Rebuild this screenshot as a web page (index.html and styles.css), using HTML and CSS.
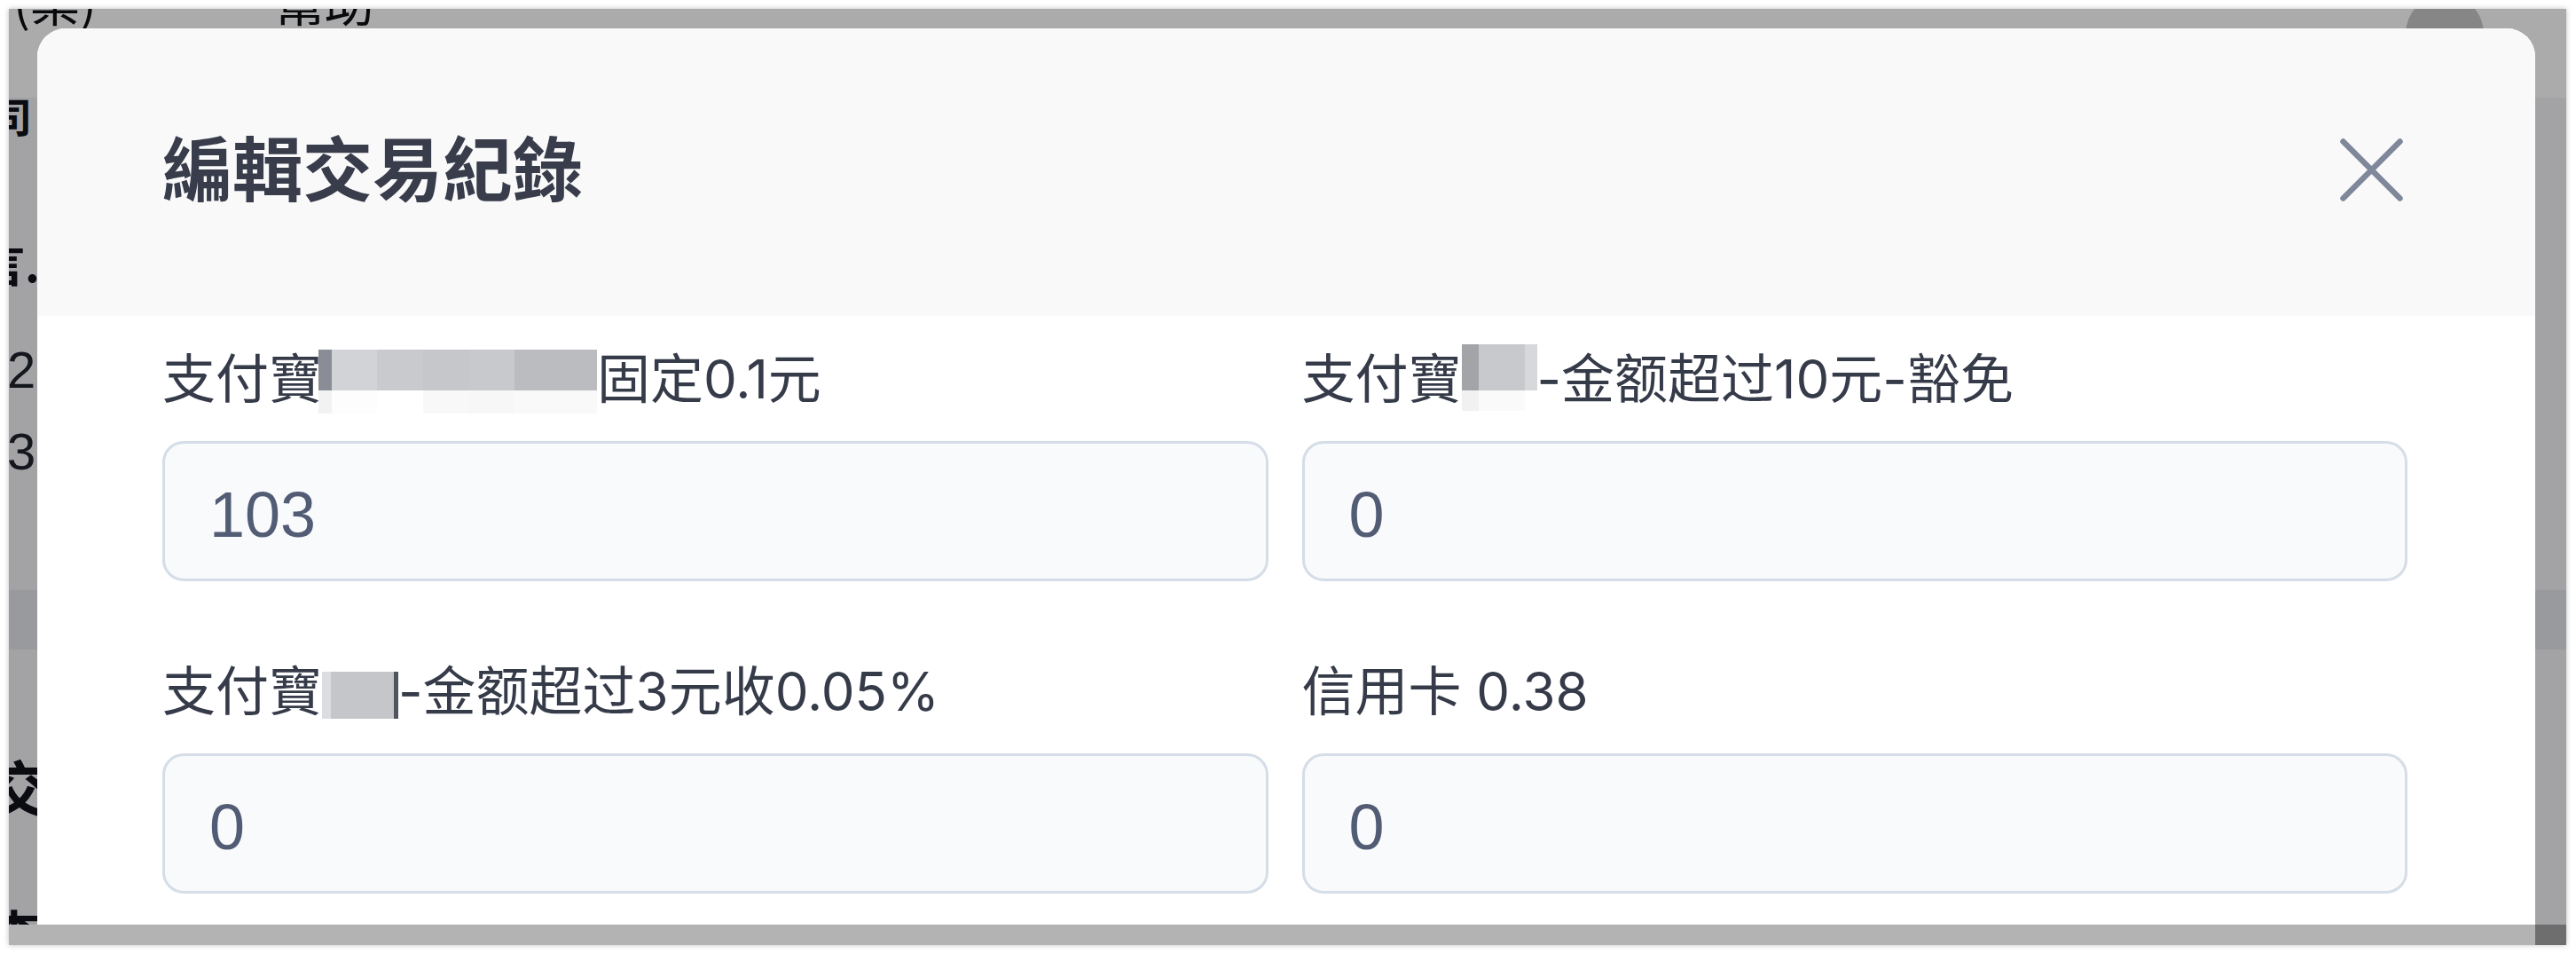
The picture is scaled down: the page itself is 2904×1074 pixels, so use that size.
FILE: index.html
```html
<!DOCTYPE html>
<html lang="zh-Hant">
<head>
<meta charset="utf-8">
<title>編輯交易紀錄</title>
<link rel="stylesheet" href="styles.css">
</head>
<body>
<div class="window">
  <div class="viewport">
    <div class="page">
      <div class="page-head">
        <div class="head-row">
          <span class="head-a">(案)</span>
          <span class="head-b">幫助</span>
          <span class="avatar"></span>
        </div>
      </div>
      <div class="page-main">
        <div class="frag f1">司</div>
        <div class="frag f2">言.</div>
        <div class="frag f3">2</div>
        <div class="frag f4">3</div>
        <div class="band"></div>
        <div class="frag f5">交</div>
        <div class="frag f6">查</div>
      </div>
    </div>
    <div class="overlay">
      <div class="modal">
        <div class="modal-head">
          <h2 class="modal-title">編輯交易紀錄</h2>
          <button class="close" type="button" aria-label="關閉">
            <svg width="76" height="76" viewBox="0 0 76 76" fill="none" stroke="currentColor" stroke-width="6.5" stroke-linecap="round">
              <path d="M3.5 3.5 67.5 67.5M67.5 3.5 3.5 67.5"/>
            </svg>
          </button>
        </div>
        <div class="modal-body">
          <div class="field">
            <label class="label">支付寶<span class="redact r1"><i class="cell a1"></i><i class="cell a2"></i><i class="cell a3"></i><i class="cell a4"></i><i class="cell a5"></i><i class="cell a6"></i></span>固定0.1元</label>
            <input class="input" type="text" value="103" readonly>
          </div>
          <div class="field">
            <label class="label">支付寶<span class="redact r2"><i class="cell b1"></i><i class="cell b2"></i><i class="cell b3"></i></span>-金额超过10元-豁免</label>
            <input class="input" type="text" value="0" readonly>
          </div>
          <div class="field">
            <label class="label">支付寶<span class="redact r3"><i class="cell c1"></i><i class="cell c2"></i><i class="cell c3"></i></span>-金额超过3元收0.05%</label>
            <input class="input" type="text" value="0" readonly>
          </div>
          <div class="field">
            <label class="label">信用卡 0.38</label>
            <input class="input" type="text" value="0" readonly>
          </div>
        </div>
      </div>
    </div>
  </div>
  <div class="hbar"><span class="hbar-fill"></span><span class="hbar-corner"></span></div>
</div>
</body>
</html>
```

FILE: styles.css
```css
html, body {
  margin: 0;
  padding: 0;
  background: #ffffff;
}

body {
  padding: 10px;
  font-family: "Noto Sans CJK TC", "Noto Sans", sans-serif;
}

.window {
  width: 2883px;
  height: 1055px;
  display: grid;
  grid-template-rows: 1fr 23px;
  overflow: hidden;
  box-shadow: 0 0 6px rgba(0, 0, 0, 0.25);
}

.viewport {
  position: relative;
  overflow: hidden;
}

/* underlying page (dimmed by overlay) */
.page {
  display: flex;
  flex-direction: column;
  height: 100%;
}

.page-head {
  height: 100px;
  flex: none;
  background: #ffffff;
}

.head-row {
  display: flex;
  align-items: flex-start;
  margin-top: -38px;
  height: 56px;
  font-size: 56px;
  line-height: 56px;
  color: #0d0f14;
}

.head-a {
  margin-left: 5px;
}

.head-b {
  margin-left: 201px;
}

.avatar {
  width: 88px;
  height: 88px;
  border-radius: 50%;
  background: #c8c8c8;
  margin-left: auto;
  margin-right: 93px;
  margin-top: 22px;
}

.page-main {
  flex: 1;
  background: #f3f4f6;
  display: flex;
  flex-direction: column;
}

.frag {
  flex: none;
  white-space: nowrap;
  color: #0f121a;
}

.f1 {
  margin-top: -4px;
  margin-left: -20px;
  height: 46px;
  font-size: 46px;
  line-height: 46px;
  font-weight: 700;
}

.f2 {
  margin-top: 118px;
  margin-left: -34px;
  height: 52px;
  font-size: 52px;
  line-height: 52px;
  font-weight: 700;
}

.f3, .f4 {
  height: 58px;
  font-size: 58px;
  line-height: 58px;
  margin-left: -2px;
  font-family: "Liberation Sans", sans-serif;
  color: #1f232c;
}

.f3 {
  margin-top: 66px;
}

.f4 {
  margin-top: 34px;
}

.band {
  flex: none;
  margin-top: 127px;
  height: 67px;
  background: #e4e6ea;
}

.f5 {
  margin-top: 120px;
  margin-left: -22px;
  height: 68px;
  font-size: 68px;
  line-height: 68px;
  font-weight: 700;
}

.f6 {
  margin-top: 101px;
  margin-left: -24px;
  height: 60px;
  font-size: 60px;
  line-height: 60px;
  font-weight: 700;
}

/* overlay + modal */
.overlay {
  position: absolute;
  inset: 0;
  background: rgba(0, 0, 0, 0.33);
  overflow: hidden;
}

.modal {
  margin: 22px 0 0 32px;
  width: 2816px;
  background: #ffffff;
  border-radius: 32px 32px 0 0;
  overflow: hidden;
}

.modal-head {
  height: 324px;
  box-sizing: border-box;
  background: #f9f9fa;
  display: flex;
  align-items: center;
  justify-content: space-between;
  padding: 0 144px 0 141px;
}

.modal-title {
  margin: 0 0 16px 0;
  font-size: 79px;
  font-weight: 700;
  color: #383c4b;
  line-height: normal;
}

.close {
  display: flex;
  padding: 0;
  border: 0;
  background: none;
  color: #7f889a;
  cursor: pointer;
}

.modal-body {
  display: grid;
  grid-template-columns: 1fr 1fr;
  column-gap: 38px;
  row-gap: 88px;
  padding: 35px 144px 60px 141px;
}

.field {
  display: flex;
  flex-direction: column;
  min-width: 0;
}

.label {
  display: flex;
  align-items: flex-start;
  height: 72px;
  font-family: "Inter", "Noto Sans CJK TC", sans-serif;
  font-size: 60px;
  line-height: 72px;
  font-weight: 400;
  color: #363b49;
  white-space: nowrap;
  margin-bottom: 34px;
}

.input {
  display: block;
  width: 100%;
  height: 158px;
  box-sizing: border-box;
  border: 3px solid #d5dde7;
  border-radius: 24px;
  background: #f8fafc;
  padding: 7px 0 0 50px;
  margin: 0;
  font-family: "Liberation Sans", Arial, sans-serif;
  font-size: 72px;
  color: #525c75;
  outline: none;
}

/* redaction mosaics */
.redact {
  display: flex;
  flex: none;
}

.cell {
  display: block;
  height: 100%;
}

.r1 {
  height: 72px;
  margin-top: 3px;
  margin-left: -4px;
}

.r2 {
  height: 75px;
  margin-top: -3px;
}

.r3 {
  height: 53px;
  margin-top: 14px;
}

.a1 { width: 15px; background: linear-gradient(#8a8d95 0 64%, #f2f2f2 64%); }
.a2 { width: 51px; background: linear-gradient(#d2d3d6 0 64%, #fdfdfd 64%); }
.a3 { width: 52px; background: linear-gradient(#c9cacd 0 64%, #ffffff 64%); }
.a4 { width: 52px; background: linear-gradient(#c6c7cb 0 64%, #f8f8f8 64%); }
.a5 { width: 51px; background: linear-gradient(#c8c9cc 0 64%, #f7f7f7 64%); }
.a6 { width: 93px; background: linear-gradient(#bbbcc0 0 64%, #f9f9f9 64%); }

.b1 { width: 19px; background: linear-gradient(#a3a4a8 0 69%, #f1f1f1 69%); }
.b2 { width: 52px; background: linear-gradient(#c8c9cc 0 69%, #fafafa 69%); }
.b3 { width: 14px; background: linear-gradient(#d7d8da 0 69%, #ffffff 69%); }

.c1 { width: 10px; background: #dcdde0; }
.c2 { width: 71px; background: #c5c6c9; }
.c3 { width: 5px; background: #50545f; }

/* bottom bar */
.hbar {
  display: flex;
}

.hbar-fill {
  flex: 1;
  background: #b3b3b3;
}

.hbar-corner {
  width: 35px;
  background: #6e6e6e;
}
```
